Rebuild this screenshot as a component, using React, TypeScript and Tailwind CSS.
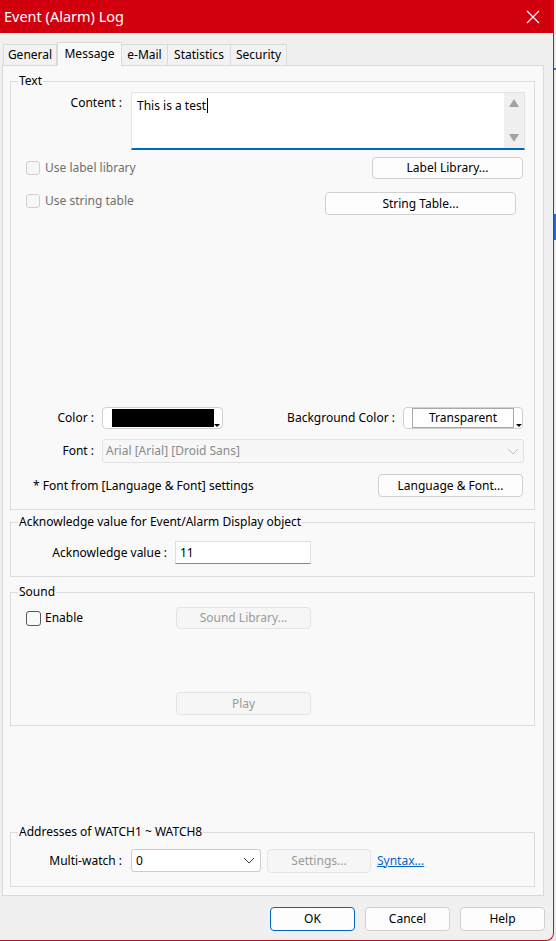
import React from "react";

function Btn({
  children,
  className = "",
  disabled = false,
  focused = false,
}: {
  children: React.ReactNode;
  className?: string;
  disabled?: boolean;
  focused?: boolean;
}) {
  const tone = disabled
    ? "border-[#e4e4e4] bg-[#f6f6f6] text-[#9a9a9a]"
    : focused
    ? "border-[#0067c0] bg-[#fdfdfd] text-black"
    : "border-[#d0d0d0] bg-[#fdfdfd] text-black";
  return (
    <div
      className={`flex shrink-0 items-center justify-center rounded-[4px] border text-[12px] leading-[16px] ${tone} ${className}`}
    >
      {children}
    </div>
  );
}

function Group({
  title,
  className = "",
  children,
}: {
  title: string;
  className?: string;
  children: React.ReactNode;
}) {
  return (
    <fieldset
      className={`ml-[7px] w-[525px] border border-[#dcdcdc] ${className}`}
    >
      <legend className="ml-[7px] px-[1px] text-[12px] leading-[16px] text-black">
        {title}
      </legend>
      {children}
    </fieldset>
  );
}

function Check({ disabled = false, size = "w-[14px] h-[14px]" }: { disabled?: boolean; size?: string }) {
  return (
    <div
      className={`${size} shrink-0 rounded-[3px] border ${
        disabled ? "border-[#cfcfcf] bg-[#f7f7f7]" : "border-[#5a5a5a] bg-[#f9f9f9]"
      }`}
    />
  );
}

export default function App() {
  return (
    <div className="flex h-[941px] w-[556px] bg-[#e9e9e9] font-['Noto_Sans',sans-serif] text-[12px] leading-[16px] text-black">
      <div className="flex h-[941px] w-[554px] shrink-0 flex-col overflow-hidden rounded-br-[8px] border-r border-b border-[#c8101c] bg-[#f0f0f0]">
        {/* Title bar */}
        <div className="flex h-[33px] shrink-0 items-center justify-between bg-[#d2000f] pl-[4px] pr-[13px]">
          <span className="text-[14.5px] leading-none text-white">Event (Alarm) Log</span>
          <svg width="14" height="14" viewBox="0 0 14 14" className="mt-[1px]">
            <path d="M1 1 L13 13 M13 1 L1 13" stroke="white" strokeWidth="1.1" fill="none" />
          </svg>
        </div>

        {/* Tabs */}
        <div className="mt-[9px] flex h-[23px] items-end pl-[3px]">
          <div className="flex h-[21px] w-[54px] items-center justify-center border border-b-0 border-[#dadada] bg-[#f2f2f2]">
            General
          </div>
          <div className="relative z-10 -mb-[1px] flex h-[24px] w-[65px] items-start justify-center border border-b-0 border-[#dadada] bg-[#f9f9f9] pt-[3px]">
            Message
          </div>
          <div className="flex h-[21px] w-[46px] items-center justify-center border border-b-0 border-l-0 border-[#dadada] bg-[#f2f2f2]">
            e-Mail
          </div>
          <div className="flex h-[21px] w-[63px] items-center justify-center border border-b-0 border-l-0 border-[#dadada] bg-[#f2f2f2]">
            Statistics
          </div>
          <div className="flex h-[21px] w-[56px] items-center justify-center border border-b-0 border-l-0 border-[#dadada] bg-[#f2f2f2]">
            Security
          </div>
        </div>

        {/* Panel */}
        <div className="ml-[2px] flex h-[831px] w-[542px] flex-col border border-[#dadada] bg-[#f9f9f9]">
          {/* Text group */}
          <Group title="Text" className="mt-[7px] pb-[12px]">
            <div className="mt-[3px] flex">
              <div className="w-[111px] pt-[3px] text-right">Content :</div>
              <div className="ml-[9px] flex h-[58px] w-[394px] border border-b-2 border-[#e3e3e3] border-b-[#0067c0] bg-white">
                <div className="flex-1 pl-[5px] pt-[2px]">
                  This is a test
                  <span className="ml-[1px] inline-block h-[15px] w-px translate-y-[3px] bg-black" />
                </div>
                <div className="flex w-[20px] flex-col items-center justify-between bg-[#f0f0f0] py-[6px]">
                  <svg width="10" height="8" viewBox="0 0 10 8">
                    <path d="M5 0 L10 8 L0 8 Z" fill="#a3a3a3" />
                  </svg>
                  <svg width="10" height="8" viewBox="0 0 10 8">
                    <path d="M0 0 L10 0 L5 8 Z" fill="#a3a3a3" />
                  </svg>
                </div>
              </div>
            </div>

            <div className="mt-[7px] flex h-[22px] items-center justify-between pl-[15px] pr-[11px]">
              <div className="flex items-center gap-[5px] text-[#6f6f6f]">
                <Check disabled />
                <span>Use label library</span>
              </div>
              <Btn className="h-[22px] w-[151px]">Label Library...</Btn>
            </div>

            <div className="mt-[13px] flex h-[23px] justify-between pl-[15px] pr-[18px]">
              <div className="mt-[1px] flex items-center gap-[5px] self-start text-[#6f6f6f]">
                <Check disabled />
                <span>Use string table</span>
              </div>
              <Btn className="h-[23px] w-[191px]">String Table...</Btn>
            </div>

            <div className="mt-[192px] flex h-[22px] items-center">
              <div className="w-[83px] text-right">Color :</div>
              <div className="ml-[8px] flex h-[22px] w-[121px] items-start rounded-[4px] border border-[#d0d0d0] bg-white pl-[9px] pt-[1px]">
                <div className="h-[18px] w-[102px] bg-black" />
                <svg width="6" height="3" viewBox="0 0 6 3" className="mt-[15px]">
                  <path d="M0 0 L6 0 L3 3 Z" fill="black" />
                </svg>
              </div>
              <div className="ml-[55px] w-[117px] text-right">Background Color :</div>
              <div className="ml-[8px] flex h-[22px] w-[120px] items-start rounded-[4px] border border-[#d0d0d0] bg-white pl-[8px]">
                <div className="flex h-[20px] w-[104px] items-center justify-center border border-[#a8a8a8] bg-white">
                  Transparent
                </div>
                <svg width="6" height="3" viewBox="0 0 6 3" className="ml-[2px] mt-[16px]">
                  <path d="M0 0 L6 0 L3 3 Z" fill="black" />
                </svg>
              </div>
            </div>

            <div className="mt-[10px] flex h-[24px] items-center">
              <div className="w-[83px] text-right">Font :</div>
              <div className="ml-[8px] flex h-[24px] w-[422px] items-center justify-between rounded-[3px] border border-[#e3e3e3] bg-[#f7f7f7] pl-[3px] pr-[4px] text-[#8a8a8a]">
                <span>Arial [Arial] [Droid Sans]</span>
                <svg width="12" height="7" viewBox="0 0 12 7">
                  <path d="M1 1 L6 6 L11 1" stroke="#c4c4c4" strokeWidth="1" fill="none" />
                </svg>
              </div>
            </div>

            <div className="mt-[11px] flex h-[23px] items-center justify-between pl-[22px] pr-[11px]">
              <span>* Font from [Language &amp; Font] settings</span>
              <Btn className="h-[23px] w-[145px]">Language &amp; Font...</Btn>
            </div>
          </Group>

          {/* Acknowledge group */}
          <Group title="Acknowledge value for Event/Alarm Display object" className="mt-[4px] pb-[12px]">
            <div className="mt-[11px] flex h-[23px] items-center">
              <div className="w-[156px] text-right">Acknowledge value :</div>
              <div className="ml-[8px] flex h-[23px] w-[136px] items-center border border-[#e0e0e0] border-b-[#8a8a8a] bg-white pl-[4px]">
                11
              </div>
            </div>
          </Group>

          {/* Sound group */}
          <Group title="Sound" className="mt-[7px] pb-[10px]">
            <div className="mt-[7px] flex h-[22px] items-center">
              <div className="flex w-[165px] items-center gap-[4px] pl-[15px]">
                <Check size="w-[15px] h-[15px]" />
                <span>Enable</span>
              </div>
              <Btn disabled className="h-[22px] w-[135px]">Sound Library...</Btn>
            </div>
            <div className="mt-[63px] flex pl-[165px]">
              <Btn disabled className="h-[23px] w-[135px]">Play</Btn>
            </div>
          </Group>

          {/* Addresses group */}
          <Group title="Addresses of WATCH1 ~ WATCH8" className="mt-[98px] pb-[14px]">
            <div className="mt-[9px] flex h-[23px] items-center">
              <div className="w-[111px] text-right">Multi-watch :</div>
              <div className="ml-[9px] flex h-[23px] w-[130px] items-center justify-between rounded-[3px] border border-[#cccccc] bg-white pl-[4px] pr-[5px]">
                <span>0</span>
                <svg width="12" height="7" viewBox="0 0 12 7">
                  <path d="M1 1 L6 6 L11 1" stroke="#444" strokeWidth="1" fill="none" />
                </svg>
              </div>
              <Btn disabled className="ml-[6px] h-[24px] w-[104px]">Settings...</Btn>
              <span className="ml-[6px] text-[#0066cc] underline">Syntax...</span>
            </div>
          </Group>
        </div>

        {/* Bottom buttons */}
        <div className="mt-[11px] flex justify-end gap-[10px] pr-[8px]">
          <Btn focused className="h-[24px] w-[85px]">OK</Btn>
          <Btn className="h-[24px] w-[85px]">Cancel</Btn>
          <Btn className="h-[24px] w-[85px]">Help</Btn>
        </div>
      </div>

      {/* Background window sliver */}
      <div className="flex w-[2px] flex-col bg-[#ececec]">
        <div className="h-[68px]" />
        <div className="h-[2px] bg-[#4a6fa5]" />
        <div className="h-[144px]" />
        <div className="h-[26px] bg-[#1f6fd1]" />
        <div className="flex-1" />
      </div>
    </div>
  );
}
